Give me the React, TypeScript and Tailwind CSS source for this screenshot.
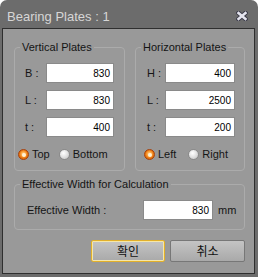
import React from "react";

const font = { fontFamily: '"Liberation Sans", Arial, sans-serif' };

function Radio({ checked, label }: { checked?: boolean; label: string }) {
  return (
    <div className="flex items-center h-[13px]">
      {checked ? (
        <span className="w-[11px] h-[11px] rounded-full border border-[#a8400a] bg-[radial-gradient(circle_at_50%_45%,#ffe0b0_0,#ffb050_28%,#e8760e_60%,#c85a06_100%)] flex items-center justify-center">
          <span className="w-[4px] h-[4px] rounded-full bg-[#fff1d6]" />
        </span>
      ) : (
        <span className="w-[11px] h-[11px] rounded-full border border-[#8a8a8a] bg-[radial-gradient(circle_at_40%_35%,#ffffff_0,#e4e4e4_45%,#bdbdbd_100%)]" />
      )}
      <span className="ml-[3px] text-[11px] leading-[13px] text-[#151515]">{label}</span>
    </div>
  );
}

function Field({
  label,
  value,
  labelW,
  inputW,
}: {
  label: string;
  value: string;
  labelW: string;
  inputW: string;
}) {
  return (
    <div className="flex items-center h-[20px]">
      <span className={`${labelW} text-[11px] text-[#151515]`}>{label}</span>
      <div
        className={`${inputW} h-[20px] bg-white border border-[#8a8a8a] flex items-center justify-end pr-[3px] text-[10px] text-black`}
      >
        {value}
      </div>
    </div>
  );
}

export default function App() {
  return (
    <div className="w-[258px] h-[277px] bg-[#6c6c6c] rounded-t-[7px] flex flex-col" style={font}>
      {/* title bar */}
      <div className="h-[28px] pt-[5px] pl-[7px] pr-[10px] flex items-center justify-between">
        <span className="text-[13px] text-[#d6d6d6]">Bearing Plates : 1</span>
        <svg width="12" height="10" viewBox="0 0 12 10" className="mb-[2px]">
          <path d="M2.5 2 L9.5 8 M9.5 2 L2.5 8" stroke="#3a3a48" strokeWidth="4.5" strokeLinecap="square" />
          <path d="M2.5 2 L9.5 8 M9.5 2 L2.5 8" stroke="#e4e4ee" strokeWidth="2.5" strokeLinecap="square" />
        </svg>
      </div>

      {/* body */}
      <div className="ml-[2px] mr-[3px] h-[246px] border border-[#2f2f2f] bg-[#999999] pl-[11px] pr-[9px] pt-[12px] flex flex-col">
        <div className="flex gap-[10px]">
          <fieldset className="w-[111px] border border-[#ababab] rounded-[4px] pl-[10px] pb-[9px]">
            <legend className="ml-[-5px] px-[2px] text-[11px] leading-[13px] text-[#141414]">Vertical Plates</legend>
            <div className="mt-[9px] flex flex-col gap-[7px]">
              <Field label="B :" value="830" labelW="w-[21px]" inputW="w-[68px]" />
              <Field label="L :" value="830" labelW="w-[21px]" inputW="w-[68px]" />
              <Field label="t :" value="400" labelW="w-[21px]" inputW="w-[68px]" />
            </div>
            <div className="mt-[11px] flex gap-[9px] ml-[-7px]">
              <Radio checked label="Top" />
              <Radio label="Bottom" />
            </div>
          </fieldset>

          <fieldset className="w-[110px] border border-[#ababab] rounded-[4px] pl-[11px] pb-[9px]">
            <legend className="ml-[-6px] px-[2px] text-[11px] leading-[13px] text-[#141414]">Horizontal Plates</legend>
            <div className="mt-[9px] flex flex-col gap-[7px]">
              <Field label="H :" value="400" labelW="w-[18px]" inputW="w-[70px]" />
              <Field label="L :" value="2500" labelW="w-[18px]" inputW="w-[70px]" />
              <Field label="t :" value="200" labelW="w-[18px]" inputW="w-[70px]" />
            </div>
            <div className="mt-[11px] flex gap-[12px] ml-[-3px]">
              <Radio checked label="Left" />
              <Radio label="Right" />
            </div>
          </fieldset>
        </div>

        <fieldset className="mt-[7px] border border-[#ababab] rounded-[4px] pl-[12px] pb-[9px]">
          <legend className="ml-[-7px] px-[2px] text-[11px] leading-[13px] text-[#141414]">
            Effective Width for Calculation
          </legend>
          <div className="mt-[9px] flex items-center h-[20px]">
            <span className="w-[116px] text-[11px] text-[#151515]">Effective Width :</span>
            <div className="w-[70px] h-[20px] bg-white border border-[#8a8a8a] flex items-center justify-end pr-[3px] text-[10px] text-black">
              830
            </div>
            <span className="ml-[5px] text-[11px] text-[#151515]">mm</span>
          </div>
        </fieldset>

        <div className="mt-[10px] flex justify-end gap-[5px]">
          <button
            className="w-[74px] h-[22px] rounded-[2px] border border-[#e2b02a] shadow-[inset_0_0_0_1px_#f6e7a8] bg-[linear-gradient(#c4c4c4,#a9a9a9)] text-[12px] text-[#111]"
            style={{ fontFamily: '"Noto Sans CJK KR", sans-serif' }}
          >
            확인
          </button>
          <button
            className="w-[75px] h-[22px] rounded-[2px] border border-[#777777] bg-[linear-gradient(#c4c4c4,#a9a9a9)] text-[12px] text-[#111]"
            style={{ fontFamily: '"Noto Sans CJK KR", sans-serif' }}
          >
            취소
          </button>
        </div>
      </div>
    </div>
  );
}
